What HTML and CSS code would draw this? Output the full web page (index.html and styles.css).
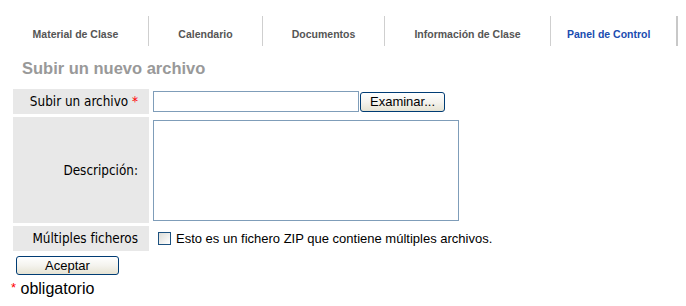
FILE: index.html
```html
<!DOCTYPE html>
<html lang="es">
<head>
<meta charset="utf-8">
<title>Subir un nuevo archivo</title>
<link rel="stylesheet" href="styles.css">
</head>
<body>
<nav class="tabs">
  <a class="tab tab-material">Material de Clase</a>
  <a class="tab tab-cal">Calendario</a>
  <a class="tab tab-docs">Documentos</a>
  <a class="tab tab-info">Información de Clase</a>
  <a class="tab tab-panel active">Panel de Control</a>
</nav>
<h2 class="title">Subir un nuevo archivo</h2>
<form class="upload">
  <div class="grid">
    <div class="label row1">Subir un archivo <span class="req">*</span></div>
    <div class="field row1">
      <span class="file-input"></span><button type="button" class="btn btn-browse">Examinar...</button>
    </div>
    <div class="label row2">Descripción:</div>
    <div class="field row2"><textarea class="desc"></textarea></div>
    <div class="label row3">Múltiples ficheros</div>
    <div class="field row3">
      <label class="check"><span class="box"></span>Esto es un fichero ZIP que contiene múltiples archivos.</label>
    </div>
  </div>
  <button type="button" class="btn btn-submit">Aceptar</button>
  <p class="note"><span class="req">*</span> obligatorio</p>
</form>
</body>
</html>
```

FILE: styles.css
```css
html, body {
  margin: 0;
  padding: 0;
  background: #fff;
}
body {
  font-family: "Liberation Sans", Arial, sans-serif;
  color: #000;
}
.tabs {
  display: grid;
  grid-template-columns: 146px 114px 122px 166px 127px;
  margin: 16px 0 0 3px;
}
.tab {
  height: 30px;
  box-sizing: border-box;
  padding-top: 12px;
  line-height: 13px;
  font-size: 10.5px;
  font-weight: bold;
  color: #555;
  text-align: center;
  border-right: 1px solid #cfcfcf;
  white-space: nowrap;
}
.tab.active {
  color: #1a4cb0;
  text-align: left;
  padding-left: 16px;
  border-right: 2px solid #c8c8c8;
}
.title {
  margin: 13px 0 0 22px;
  font-size: 16.5px;
  line-height: 19px;
  font-weight: bold;
  color: #999;
}
.upload {
  margin: 11px 0 0 13px;
}
.grid {
  display: grid;
  grid-template-columns: 136px 1fr;
  grid-template-rows: 25px 106px 25px;
  row-gap: 3px;
  column-gap: 4px;
}
.label {
  background: #e8e8e8;
  font-family: "DejaVu Sans Condensed", "DejaVu Sans", sans-serif;
  font-stretch: condensed;
  font-size: 13.4px;
  text-align: right;
  padding-right: 11px;
  display: flex;
  align-items: center;
  justify-content: flex-end;
  white-space: pre;
}
.req {
  color: #f00;
}
.field {
  display: flex;
  align-items: flex-start;
}
.field.row1 { padding-top: 2px; }
.field.row2 { padding-top: 3px; }
.field.row3 { align-items: center; }
.file-input {
  display: block;
  width: 206px;
  height: 21px;
  box-sizing: border-box;
  border: 1px solid #7f9db9;
  background: #fff;
}
.btn {
  font-family: "Liberation Sans", Arial, sans-serif;
  font-size: 13px;
  color: #000;
  border: 1px solid #003c74;
  border-radius: 3px;
  background: linear-gradient(#ffffff 0%, #f4f3ee 50%, #e6e3d3 100%);
  padding: 0;
  box-sizing: border-box;
}
.btn-browse {
  width: 85px;
  height: 20px;
  margin: 1px 0 0 1px;
  line-height: 18px;
}
.desc {
  display: block;
  width: 306px;
  height: 101px;
  box-sizing: border-box;
  border: 1px solid #7f9db9;
  margin: 0;
  padding: 0;
  resize: none;
}
.check {
  display: flex;
  align-items: center;
  font-size: 13px;
  margin-left: 5px;
}
.box {
  display: block;
  width: 13px;
  height: 13px;
  box-sizing: border-box;
  border: 1px solid #1c5180;
  background: linear-gradient(135deg, #dcdcd7 0%, #ffffff 100%);
  margin-right: 5px;
}
.btn-submit {
  display: block;
  width: 103px;
  height: 19px;
  margin: 5px 0 0 3px;
  line-height: 17px;
}
.note {
  margin: 4px 0 0 -2px;
  font-size: 16px;
  line-height: 18px;
}
.note .req {
  font-size: 13px;
  vertical-align: 2px;
}
```
